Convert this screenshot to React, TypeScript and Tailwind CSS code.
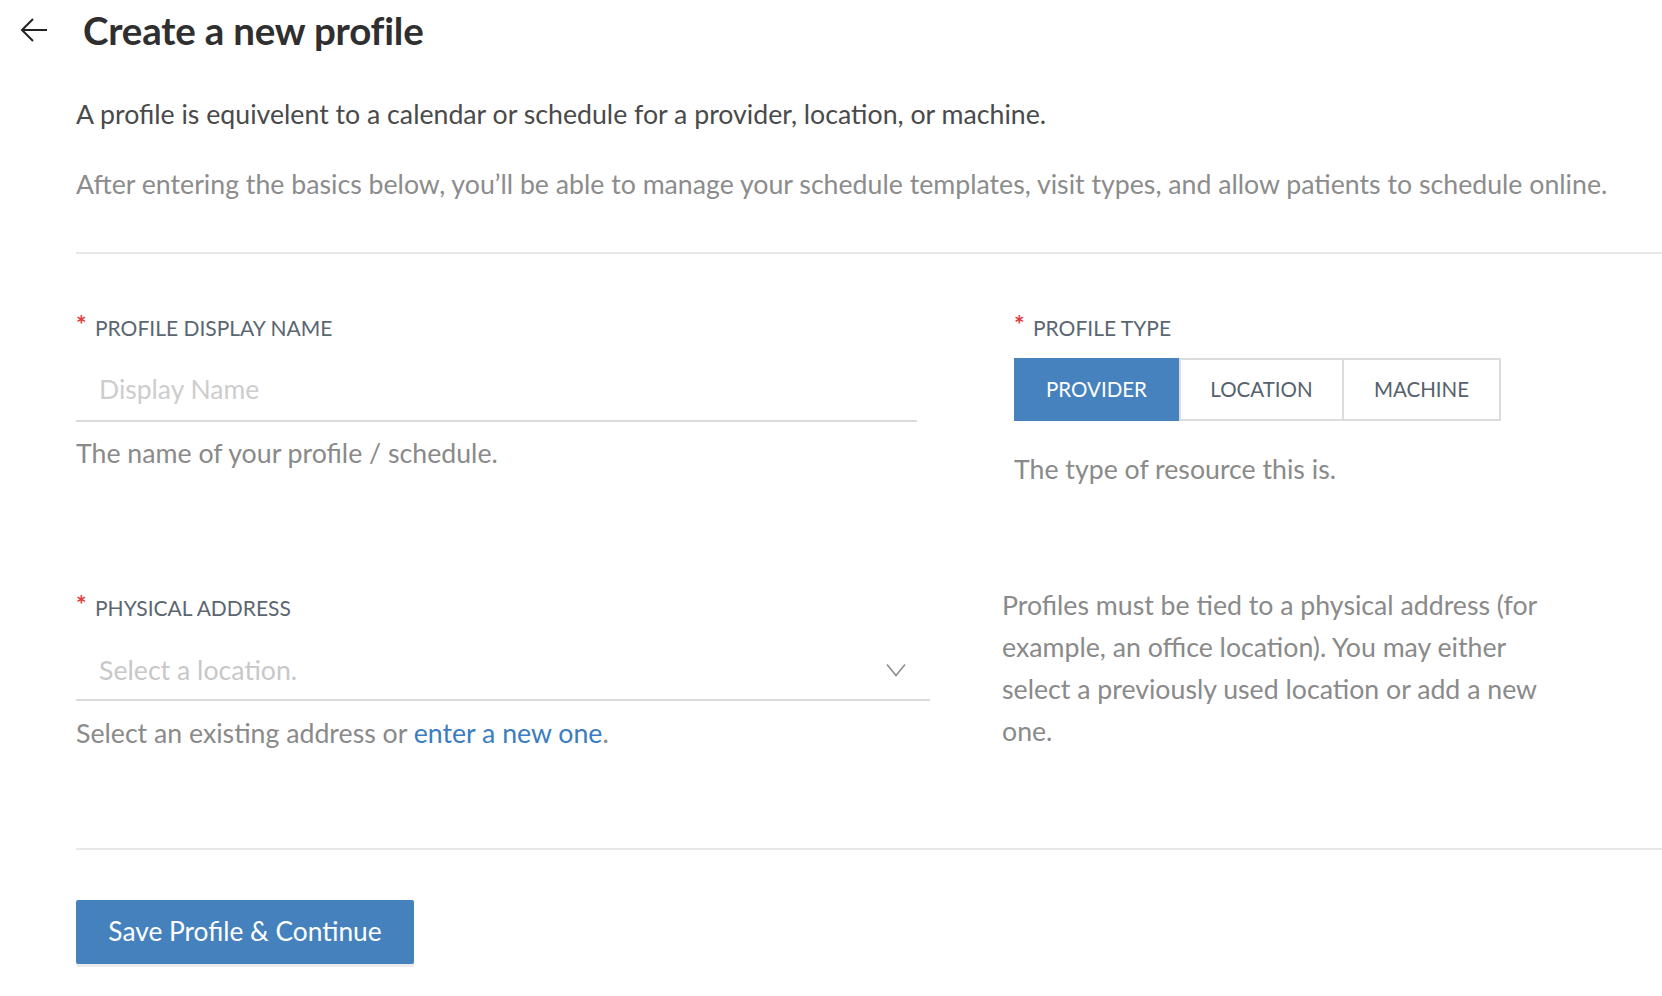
import React, { useState } from "react";

type ProfileType = "provider" | "location" | "machine";

const TYPES: { key: ProfileType; label: string; width: string }[] = [
  { key: "provider", label: "PROVIDER", width: "w-[165px]" },
  { key: "location", label: "LOCATION", width: "w-[165px]" },
  { key: "machine", label: "MACHINE", width: "w-[157px]" },
];

function FieldLabel({ children }: { children: React.ReactNode }) {
  return (
    <div className="flex h-[28px] items-center text-[21px] leading-[28px] text-[#5b6671]">
      <span className="relative -top-[4px] w-[19px] text-[25px] font-bold text-[#e3393a]">*</span>
      <span>{children}</span>
    </div>
  );
}

export default function App() {
  const [profileType, setProfileType] = useState<ProfileType>("provider");
  const [name, setName] = useState("");

  return (
    <div className="min-h-screen bg-white font-['Lato','Noto_Sans',sans-serif] text-[#333]">
      {/* Header */}
      <div className="flex h-[60px] items-center pl-[18px]">
        <button className="flex h-[30px] w-[32px] items-center justify-center text-[#222]">
          <svg width="30" height="26" viewBox="0 0 30 26" fill="none" stroke="currentColor" strokeWidth="2">
            <path d="M28 13H3" />
            <path d="M14 2L3 13l11 11" />
          </svg>
        </button>
        <h1 className="ml-[33px] text-[38.5px] font-bold leading-[44px] tracking-[-0.2px] text-[#2f2f2f]">
          Create a new profile
        </h1>
      </div>

      <div className="pl-[76px]">
        <p className="mt-[38px] text-[26.7px] leading-[32px] text-[#4a4a4a]">
          A profile is equivelent to a calendar or schedule for a provider, location, or machine.
        </p>
        <p className="mt-[38px] text-[26.7px] leading-[32px] text-[#8c8c8c]">
          After entering the basics below, you’ll be able to manage your schedule templates, visit types, and allow
          patients to schedule online.
        </p>

        <div className="mt-[52px] border-t-2 border-[#e8e8e8]" />

        {/* Row 1 */}
        <div className="mt-[60px] flex h-[270px]">
          <div className="w-[841px]">
            <FieldLabel>PROFILE DISPLAY NAME</FieldLabel>
            <div className="h-[80px] border-b-2 border-[#dadada] pl-[23px] pt-[32px]">
              <input
                value={name}
                onChange={(e) => setName(e.target.value)}
                placeholder="Display Name"
                className="h-[30px] w-full bg-transparent text-[26.5px] leading-[30px] text-[#333] outline-none placeholder:text-[#cdcdcd]"
              />
            </div>
            <p className="mt-[15px] text-[26.7px] leading-[32px] text-[#8a8a8a]">The name of your profile / schedule.</p>
          </div>

          <div className="ml-[97px]">
            <FieldLabel>PROFILE TYPE</FieldLabel>
            <div className="mt-[16px] flex h-[63px]">
              {TYPES.map((t, i) => {
                const active = profileType === t.key;
                return (
                  <button
                    key={t.key}
                    onClick={() => setProfileType(t.key)}
                    className={`${t.width} h-full text-[20.5px] ${
                      active
                        ? "bg-[#4682bd] text-white"
                        : `border-2 border-[#dcdcdc] text-[#56616c] ${i === 2 ? "border-l-0" : ""}`
                    }`}
                  >
                    {t.label}
                  </button>
                );
              })}
            </div>
            <p className="mt-[32px] text-[26.7px] leading-[32px] text-[#8a8a8a]">The type of resource this is.</p>
          </div>
        </div>

        {/* Row 2 */}
        <div className="flex h-[264px]">
          <div className="w-[854px] pt-[10px]">
            <FieldLabel>PHYSICAL ADDRESS</FieldLabel>
            <div className="flex h-[79px] items-start justify-between border-b-2 border-[#dadada] pl-[23px] pr-[24px] pt-[33px]">
              <span className="text-[26.7px] leading-[30px] text-[#c8c8c8]">Select a location.</span>
              <svg width="20" height="14" viewBox="0 0 20 14" fill="none" stroke="#8d8d8d" strokeWidth="1.6" className="mt-[8px]">
                <path d="M1 1.5l9 11 9-11" />
              </svg>
            </div>
            <p className="mt-[16px] text-[26.7px] leading-[32px] text-[#8a8a8a]">
              Select an existing address or{" "}
              <a href="#" className="text-[#3b7dc0]">
                enter a new one
              </a>
              .
            </p>
          </div>

          <p className="ml-[72px] w-[558px] text-[26.7px] leading-[42px] text-[#8a8a8a]">
            Profiles must be tied to a physical address (for example, an office location). You may either select a
            previously used location or add a new one.
          </p>
        </div>

        <div className="border-t-2 border-[#e8e8e8]" />

        <button className="mt-[50px] h-[64px] w-[338px] rounded-[2px] bg-[#4582bd] text-[26.3px] text-white shadow-[0_3px_0_#ececec]">
          Save Profile &amp; Continue
        </button>
      </div>
    </div>
  );
}
